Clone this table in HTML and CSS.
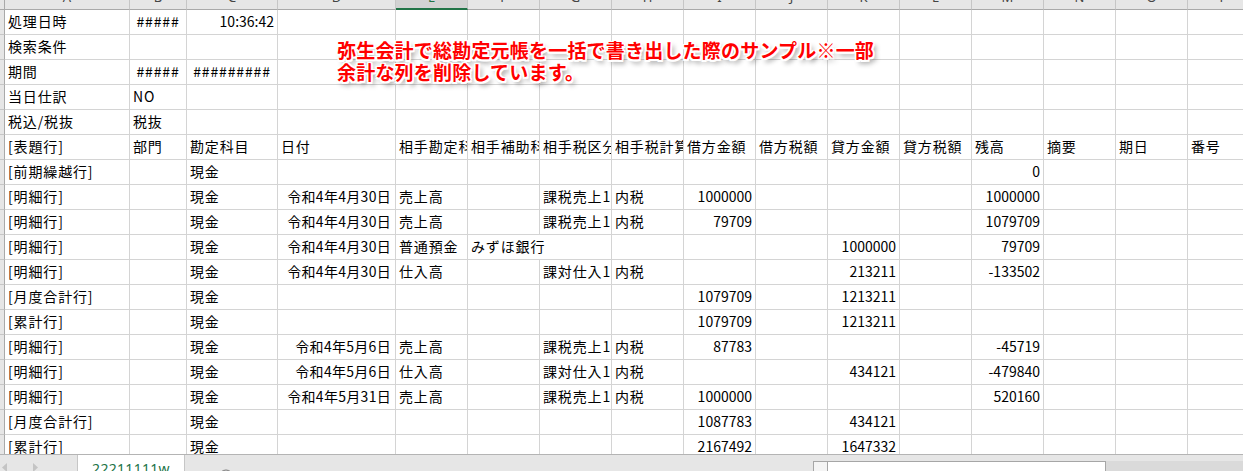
FILE: index.html
```html
<!DOCTYPE html>
<html lang="ja">
<head>
<meta charset="utf-8">
<title>総勘定元帳</title>
<link rel="stylesheet" href="styles.css">
</head>
<body>
<div class="app">
  <div class="sheet">
    <div class="colhead">
      <div class="ch corner"></div>
      <div class="ch">A</div><div class="ch">B</div><div class="ch">C</div><div class="ch">D</div>
      <div class="ch sel">E</div><div class="ch">F</div><div class="ch">G</div><div class="ch">H</div>
      <div class="ch">I</div><div class="ch">J</div><div class="ch">K</div><div class="ch">L</div>
      <div class="ch">M</div><div class="ch">N</div><div class="ch">O</div><div class="ch">P</div>
    </div>

    <div class="row"><div class="rh"></div><div class="c">処理日時</div><div class="c h">#####</div><div class="c n">10:36:42</div><div class="c"></div><div class="c"></div><div class="c"></div><div class="c"></div><div class="c"></div><div class="c"></div><div class="c"></div><div class="c"></div><div class="c"></div><div class="c"></div><div class="c"></div><div class="c"></div><div class="c"></div></div>
    <div class="row"><div class="rh"></div><div class="c">検索条件</div><div class="c"></div><div class="c"></div><div class="c"></div><div class="c"></div><div class="c"></div><div class="c"></div><div class="c"></div><div class="c"></div><div class="c"></div><div class="c"></div><div class="c"></div><div class="c"></div><div class="c"></div><div class="c"></div><div class="c"></div></div>
    <div class="row"><div class="rh"></div><div class="c">期間</div><div class="c h">#####</div><div class="c h">#########</div><div class="c"></div><div class="c"></div><div class="c"></div><div class="c"></div><div class="c"></div><div class="c"></div><div class="c"></div><div class="c"></div><div class="c"></div><div class="c"></div><div class="c"></div><div class="c"></div><div class="c"></div></div>
    <div class="row"><div class="rh"></div><div class="c">当日仕訳</div><div class="c">NO</div><div class="c"></div><div class="c"></div><div class="c"></div><div class="c"></div><div class="c"></div><div class="c"></div><div class="c"></div><div class="c"></div><div class="c"></div><div class="c"></div><div class="c"></div><div class="c"></div><div class="c"></div><div class="c"></div></div>
    <div class="row"><div class="rh"></div><div class="c">税込/税抜</div><div class="c">税抜</div><div class="c"></div><div class="c"></div><div class="c"></div><div class="c"></div><div class="c"></div><div class="c"></div><div class="c"></div><div class="c"></div><div class="c"></div><div class="c"></div><div class="c"></div><div class="c"></div><div class="c"></div><div class="c"></div></div>
    <div class="row"><div class="rh"></div><div class="c">[表題行]</div><div class="c">部門</div><div class="c">勘定科目</div><div class="c">日付</div><div class="c">相手勘定科目</div><div class="c">相手補助科目</div><div class="c">相手税区分</div><div class="c">相手税計算</div><div class="c">借方金額</div><div class="c">借方税額</div><div class="c">貸方金額</div><div class="c">貸方税額</div><div class="c">残高</div><div class="c">摘要</div><div class="c">期日</div><div class="c">番号</div></div>
    <div class="row"><div class="rh"></div><div class="c">[前期繰越行]</div><div class="c"></div><div class="c">現金</div><div class="c"></div><div class="c"></div><div class="c"></div><div class="c"></div><div class="c"></div><div class="c"></div><div class="c"></div><div class="c"></div><div class="c"></div><div class="c n">0</div><div class="c"></div><div class="c"></div><div class="c"></div></div>
    <div class="row"><div class="rh"></div><div class="c">[明細行]</div><div class="c"></div><div class="c">現金</div><div class="c d">令和4年4月30日</div><div class="c">売上高</div><div class="c"></div><div class="c">課税売上1</div><div class="c">内税</div><div class="c n">1000000</div><div class="c"></div><div class="c"></div><div class="c"></div><div class="c n">1000000</div><div class="c"></div><div class="c"></div><div class="c"></div></div>
    <div class="row"><div class="rh"></div><div class="c">[明細行]</div><div class="c"></div><div class="c">現金</div><div class="c d">令和4年4月30日</div><div class="c">売上高</div><div class="c"></div><div class="c">課税売上1</div><div class="c">内税</div><div class="c n">79709</div><div class="c"></div><div class="c"></div><div class="c"></div><div class="c n">1079709</div><div class="c"></div><div class="c"></div><div class="c"></div></div>
    <div class="row"><div class="rh"></div><div class="c">[明細行]</div><div class="c"></div><div class="c">現金</div><div class="c d">令和4年4月30日</div><div class="c">普通預金</div><div class="c span2">みずほ銀行</div><div class="c"></div><div class="c"></div><div class="c"></div><div class="c n">1000000</div><div class="c"></div><div class="c n">79709</div><div class="c"></div><div class="c"></div><div class="c"></div></div>
    <div class="row"><div class="rh"></div><div class="c">[明細行]</div><div class="c"></div><div class="c">現金</div><div class="c d">令和4年4月30日</div><div class="c">仕入高</div><div class="c"></div><div class="c">課対仕入1</div><div class="c">内税</div><div class="c"></div><div class="c"></div><div class="c n">213211</div><div class="c"></div><div class="c n">-133502</div><div class="c"></div><div class="c"></div><div class="c"></div></div>
    <div class="row"><div class="rh"></div><div class="c">[月度合計行]</div><div class="c"></div><div class="c">現金</div><div class="c"></div><div class="c"></div><div class="c"></div><div class="c"></div><div class="c"></div><div class="c n">1079709</div><div class="c"></div><div class="c n">1213211</div><div class="c"></div><div class="c"></div><div class="c"></div><div class="c"></div><div class="c"></div></div>
    <div class="row"><div class="rh"></div><div class="c">[累計行]</div><div class="c"></div><div class="c">現金</div><div class="c"></div><div class="c"></div><div class="c"></div><div class="c"></div><div class="c"></div><div class="c n">1079709</div><div class="c"></div><div class="c n">1213211</div><div class="c"></div><div class="c"></div><div class="c"></div><div class="c"></div><div class="c"></div></div>
    <div class="row"><div class="rh"></div><div class="c">[明細行]</div><div class="c"></div><div class="c">現金</div><div class="c d">令和4年5月6日</div><div class="c">売上高</div><div class="c"></div><div class="c">課税売上1</div><div class="c">内税</div><div class="c n">87783</div><div class="c"></div><div class="c"></div><div class="c"></div><div class="c n">-45719</div><div class="c"></div><div class="c"></div><div class="c"></div></div>
    <div class="row"><div class="rh"></div><div class="c">[明細行]</div><div class="c"></div><div class="c">現金</div><div class="c d">令和4年5月6日</div><div class="c">仕入高</div><div class="c"></div><div class="c">課対仕入1</div><div class="c">内税</div><div class="c"></div><div class="c"></div><div class="c n">434121</div><div class="c"></div><div class="c n">-479840</div><div class="c"></div><div class="c"></div><div class="c"></div></div>
    <div class="row"><div class="rh"></div><div class="c">[明細行]</div><div class="c"></div><div class="c">現金</div><div class="c d">令和4年5月31日</div><div class="c">売上高</div><div class="c"></div><div class="c">課税売上1</div><div class="c">内税</div><div class="c n">1000000</div><div class="c"></div><div class="c"></div><div class="c"></div><div class="c n">520160</div><div class="c"></div><div class="c"></div><div class="c"></div></div>
    <div class="row"><div class="rh"></div><div class="c">[月度合計行]</div><div class="c"></div><div class="c">現金</div><div class="c"></div><div class="c"></div><div class="c"></div><div class="c"></div><div class="c"></div><div class="c n">1087783</div><div class="c"></div><div class="c n">434121</div><div class="c"></div><div class="c"></div><div class="c"></div><div class="c"></div><div class="c"></div></div>
    <div class="row"><div class="rh"></div><div class="c">[累計行]</div><div class="c"></div><div class="c">現金</div><div class="c"></div><div class="c"></div><div class="c"></div><div class="c"></div><div class="c"></div><div class="c n">2167492</div><div class="c"></div><div class="c n">1647332</div><div class="c"></div><div class="c"></div><div class="c"></div><div class="c"></div><div class="c"></div></div>

    <div class="note">弥生会計で総勘定元帳を一括で書き出した際のサンプル※一部<br>余計な列を削除しています。</div>
  </div>

  <div class="tabbar">
    <div class="nav">
      <svg width="6" height="9" viewBox="0 0 6 9"><polygon points="5,0 0,4.5 5,9" fill="#c4c4c4"/></svg>
      <svg width="6" height="9" viewBox="0 0 6 9"><polygon points="1,0 6,4.5 1,9" fill="#c4c4c4"/></svg>
    </div>
    <div class="tab">22211111w</div>
    <div class="add">
      <svg width="16" height="16" viewBox="0 0 16 16"><circle cx="8" cy="8" r="7" fill="none" stroke="#777" stroke-width="1"/><path d="M8 4.5v7M4.5 8h7" stroke="#666" stroke-width="1.4"/></svg>
    </div>
    <div class="spacer"></div>
    <div class="dots">
      <svg width="2" height="9" viewBox="0 0 2 9"><rect x="0" y="0" width="2" height="2" fill="#999"/><rect x="0" y="3.5" width="2" height="2" fill="#999"/><rect x="0" y="7" width="2" height="2" fill="#999"/></svg>
    </div>
    <div class="hscroll">
      <div class="sbtn"><svg width="4" height="7" viewBox="0 0 4 7"><polygon points="4,0 0,3.5 4,7" fill="#555"/></svg></div>
      <div class="thumb"></div>
      <div class="track"></div>
    </div>
  </div>
</div>
</body>
</html>
```

FILE: styles.css
```css
* { box-sizing: border-box; }

html, body {
  margin: 0;
  padding: 0;
}

body {
  width: 1243px;
  height: 471px;
  overflow: hidden;
  background: #ffffff;
  font-family: "Noto Sans CJK JP", "Noto Sans", sans-serif;
  color: #000;
}

.app {
  display: flex;
  flex-direction: column;
  width: 1243px;
  height: 471px;
}

.sheet {
  position: relative;
  flex: none;
  height: 454px;
  overflow: hidden;
}

.colhead,
.row {
  display: grid;
  grid-template-columns: 5px 125px 57px 91px 118px repeat(12, 72px);
  width: 1260px;
}

.colhead {
  height: 23px;
  margin-top: -13px;
}

.ch {
  background: #e6e6e6;
  border-right: 1px solid #c6c6c6;
  border-bottom: 1px solid #a9a9a9;
  font: 13px/20px "Noto Sans", sans-serif;
  color: #444;
  text-align: center;
}

.ch.corner {
  border-right: 1px solid #a9a9a9;
}

.ch.sel {
  background: #d2d2d2;
  color: #217346;
  border-bottom: 2px solid #217346;
}

.row {
  height: 25px;
}

.rh {
  background: #e6e6e6;
  border-right: 1px solid #a9a9a9;
  border-bottom: 1px solid #c6c6c6;
}

.c {
  border-right: 1px solid #d4d4d4;
  border-bottom: 1px solid #d4d4d4;
  padding: 0 3px 2px 3px;
  font-size: 14px;
  line-height: 22px;
  letter-spacing: 0.85px;
  white-space: nowrap;
  overflow: hidden;
}

.c.n {
  text-align: right;
  letter-spacing: 0;
}

.c.d {
  text-align: right;
  letter-spacing: 0.3px;
  padding-right: 4px;
}

.c.h {
  text-align: center;
  padding: 0 0 2px 0;
}

.c.span2 {
  grid-column: span 2;
}

.note {
  position: absolute;
  left: 337px;
  top: 39px;
  font-size: 19px;
  line-height: 21.5px;
  font-weight: 700;
  letter-spacing: 0.2px;
  color: #ff0000;
  white-space: nowrap;
  text-shadow:
    1.5px 0 0 #fff, -1.5px 0 0 #fff, 0 1.5px 0 #fff, 0 -1.5px 0 #fff,
    1.5px 1.5px 0 #fff, -1.5px -1.5px 0 #fff, 1.5px -1.5px 0 #fff, -1.5px 1.5px 0 #fff,
    3px 4px 5px rgba(0, 0, 0, 0.45);
}

/* bottom sheet-tab bar */
.tabbar {
  flex: none;
  height: 17px;
  display: flex;
  align-items: flex-start;
  background: #e6e6e6;
  border-top: 1px solid #b4b4b4;
  overflow: hidden;
}

.nav {
  width: 77px;
  display: flex;
  gap: 24px;
  padding: 8px 0 0 2px;
}

.tab {
  width: 108px;
  height: 18px;
  margin-top: -1px;
  background: #ffffff;
  border-left: 1px solid #c6c6c6;
  border-right: 1px solid #c6c6c6;
  color: #217346;
  font: 14px/20px "Noto Sans", sans-serif;
  letter-spacing: 0.3px;
  text-align: center;
  padding-top: 5px;
}

.add {
  width: 49px;
  padding: 11px 0 0 33px;
}

.spacer {
  flex: 1;
}

.dots {
  width: 23px;
  padding: 8px 0 0 6px;
}

.hscroll {
  width: 430px;
  height: 12px;
  margin-top: 6px;
  display: flex;
}

.sbtn {
  width: 15px;
  height: 12px;
  background: #f4f4f4;
  border: 1px solid #a6a6a6;
  border-bottom: 0;
  padding: 2px 0 0 4px;
}

.thumb {
  width: 278px;
  height: 12px;
  background: #ffffff;
  border-top: 1px solid #a6a6a6;
  border-right: 1px solid #a6a6a6;
}

.track {
  flex: 1;
  height: 12px;
  background: #dadada;
}
```
